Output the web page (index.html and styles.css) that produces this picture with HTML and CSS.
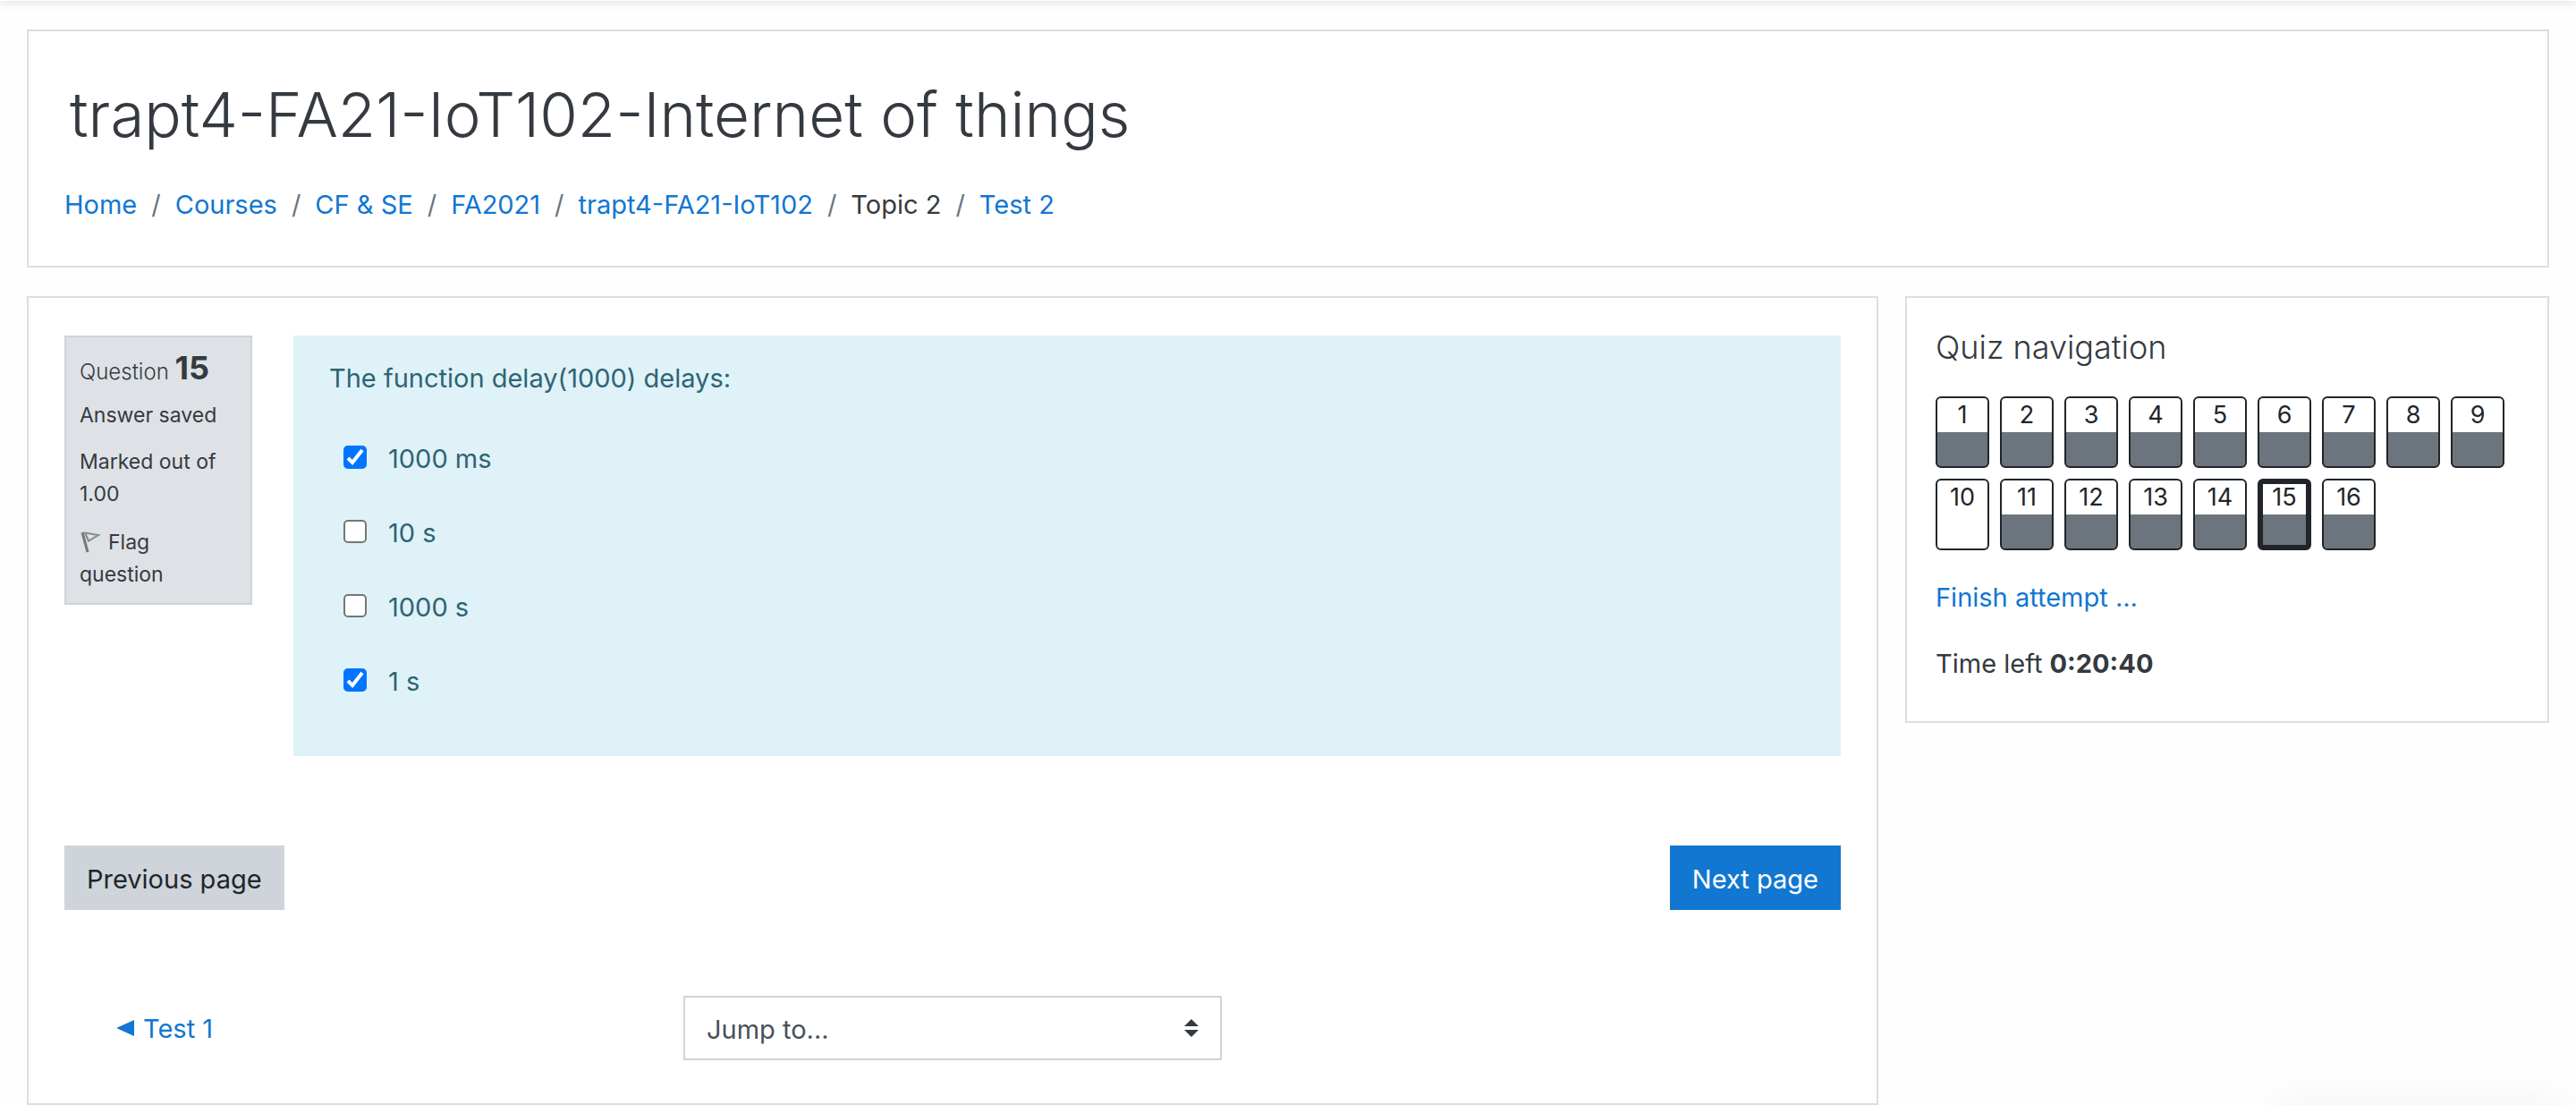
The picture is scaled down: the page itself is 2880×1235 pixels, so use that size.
FILE: index.html
```html
<!DOCTYPE html>
<html lang="en">
<head>
<meta charset="utf-8">
<meta name="viewport" content="width=device-width, initial-scale=1">
<title>Test 2</title>
<link rel="stylesheet" href="styles.css">
</head>
<body>
<div class="navbar-edge"></div>
<div class="page">
  <header class="card page-header">
    <h1 class="page-title">trapt4-FA21-IoT102-Internet of things</h1>
    <nav aria-label="Breadcrumb">
      <ol class="breadcrumb">
        <li><a href="#">Home</a></li>
        <li><a href="#">Courses</a></li>
        <li><a href="#">CF &amp; SE</a></li>
        <li><a href="#">FA2021</a></li>
        <li><a href="#">trapt4-FA21-IoT102</a></li>
        <li>Topic 2</li>
        <li><a href="#">Test 2</a></li>
      </ol>
    </nav>
  </header>

  <div class="columns">
    <main class="card quiz">
      <div class="question">
        <section class="info">
          <h2 class="info-number">Question <span class="qno">15</span></h2>
          <p class="info-state">Answer saved</p>
          <p class="info-grade">Marked out of 1.00</p>
          <a class="flag" href="#"><svg class="flag-icon" width="24" height="24" viewBox="0 0 24 24" aria-hidden="true"><path d="M3 1 L9 23" fill="none" stroke="#777" stroke-width="3"/><path d="M6 1.500 L21 4 L10 10.500 Z" fill="none" stroke="#8a8a8a" stroke-width="2"/></svg>Flag question</a>
        </section>
        <form class="formulation">
          <p class="qtext">The function delay(1000) delays:</p>
          <div class="answers">
            <label class="answer"><input class="tick" type="checkbox" checked><span>1000 ms</span></label>
            <label class="answer"><input class="tick" type="checkbox"><span>10 s</span></label>
            <label class="answer"><input class="tick" type="checkbox"><span>1000 s</span></label>
            <label class="answer"><input class="tick" type="checkbox" checked><span>1 s</span></label>
          </div>
        </form>
      </div>
      <div class="pager">
        <button class="btn btn-secondary" type="button">Previous page</button>
        <button class="btn btn-primary" type="button">Next page</button>
      </div>
      <div class="activity-nav">
        <a class="prev-activity" href="#"><svg width="20" height="18" viewBox="0 0 20 18" aria-hidden="true"><path d="M0 9 L20 0 V18 Z" fill="#1177d1"/></svg>Test 1</a>
        <div class="jump">
          <select class="jump-select" aria-label="Jump to...">
            <option>Jump to...</option>
          </select>
          <svg class="jump-arrows" width="16" height="20" viewBox="0 0 16 20" aria-hidden="true"><path d="M0 8 L8 0 L16 8 Z M0 12 L8 20 L16 12 Z" fill="#343a40"/></svg>
        </div>
      </div>
    </main>

    <aside class="card quiz-nav">
      <h2 class="quiz-nav-title">Quiz navigation</h2>
      <div class="qn-buttons">
        <a class="qn answered" href="#">1</a>
        <a class="qn answered" href="#">2</a>
        <a class="qn answered" href="#">3</a>
        <a class="qn answered" href="#">4</a>
        <a class="qn answered" href="#">5</a>
        <a class="qn answered" href="#">6</a>
        <a class="qn answered" href="#">7</a>
        <a class="qn answered" href="#">8</a>
        <a class="qn answered" href="#">9</a>
        <a class="qn" href="#">10</a>
        <a class="qn answered" href="#">11</a>
        <a class="qn answered" href="#">12</a>
        <a class="qn answered" href="#">13</a>
        <a class="qn answered" href="#">14</a>
        <a class="qn answered current" href="#" aria-current="page">15</a>
        <a class="qn answered" href="#">16</a>
      </div>
      <a class="finish" href="#">Finish attempt ...</a>
      <p class="timer">Time left <strong>0:20:40</strong></p>
    </aside>
  </div>
</div>
<div class="drawer-shadow"></div>
</body>
</html>
```
FILE: styles.css
```css
*, *::before, *::after { box-sizing: border-box; }

body {
  margin: 0;
  background: #fefefe;
  color: #343a40;
  font-family: Inter, "Liberation Sans", sans-serif;
  font-size: 29px;
  line-height: 45px;
}

h1, h2, p, ol { margin: 0; padding: 0; }
a { color: #1177d1; text-decoration: none; }

/* only the lower edge of the fixed bar and its shadow reach into view */
.navbar-edge {
  position: fixed;
  top: -39px;
  left: 0;
  right: 0;
  height: 40px;
  background: #fefefe;
  box-shadow: 0 4px 8px rgba(0, 0, 0, 0.09);
}

.page { padding: 33px 30px 0; }

.card {
  background: #fff;
  border: 2px solid #dedede;
}

.page-header { padding: 48px 40px 46px; }

.page-title {
  padding-left: 6px;
  margin-bottom: 33px;
  font-size: 69px;
  font-weight: 300;
  line-height: 90px;
}

.breadcrumb {
  display: flex;
  flex-wrap: wrap;
  list-style: none;
}
.breadcrumb li + li::before {
  content: "/";
  padding: 0 16px;
  color: #6c757d;
}

.columns {
  display: grid;
  grid-template-columns: minmax(0, 1fr) 720px;
  gap: 30px;
  align-items: start;
  margin-top: 32px;
}

.quiz { padding: 42px 40px 48px; }

.question {
  display: flex;
  align-items: flex-start;
  gap: 46px;
}

.info {
  flex: none;
  width: 210px;
  padding: 12px 15px 14px;
  background: #dee2e6;
  border: 2px solid #ced4da;
  font-size: 23px;
  line-height: 36px;
}
.info-number {
  margin-bottom: 8px;
  font-size: 24px;
  font-weight: 300;
  line-height: 44px;
}
.qno { font-size: 36px; font-weight: 700; }
.info-state { margin-bottom: 16px; }
.info-grade { margin-bottom: 18px; }
.flag { display: block; color: #343a40; }
.flag-icon { margin-right: 8px; vertical-align: -4px; }

.formulation {
  flex: 1;
  min-height: 470px;
  padding: 25px 40px;
  background: #def2f8;
  color: #2f6473;
}
.qtext { margin-bottom: 45px; }
.answers {
  display: flex;
  flex-direction: column;
  gap: 38px;
  padding-left: 16px;
}
.answer {
  display: flex;
  align-items: center;
  gap: 24px;
}
.tick {
  flex: none;
  width: 26px;
  height: 26px;
  margin: 0 0 4px;
  appearance: none;
  background: #fff;
  border: 2px solid #767676;
  border-radius: 5px;
}
.tick:checked {
  border: 0;
  background: #0075ff url("data:image/svg+xml,%3Csvg xmlns='http://www.w3.org/2000/svg' viewBox='0 0 26 26'%3E%3Cpath d='M5 14 L10 19 L21 5' fill='none' stroke='white' stroke-width='4'/%3E%3C/svg%3E");
}

.pager {
  display: flex;
  justify-content: space-between;
  margin-top: 100px;
}
.btn {
  height: 72px;
  padding: 2px 25px 0;
  border: 0;
  font: inherit;
}
.btn-secondary { background: #ced4da; color: #212529; }
.btn-primary { background: #1177d1; color: #fff; }

.activity-nav {
  display: grid;
  grid-template-columns: 634px 602px;
  align-items: center;
  margin-top: 96px;
  padding-left: 58px;
}
.prev-activity {
  display: flex;
  align-items: center;
  gap: 10px;
}
.jump {
  display: grid;
  align-items: center;
}
.jump > * { grid-area: 1 / 1; }
.jump-select {
  width: 100%;
  height: 72px;
  padding: 2px 24px 0;
  appearance: none;
  background: #fff;
  border: 2px solid #ced4da;
  border-radius: 0;
  color: #495057;
  font: inherit;
}
.jump-arrows {
  justify-self: end;
  margin-right: 26px;
  pointer-events: none;
}

.quiz-nav { padding: 30px 32px 42px; }
.quiz-nav-title {
  margin-bottom: 30px;
  font-size: 36px;
  font-weight: 300;
  line-height: 50px;
}
.qn-buttons {
  display: flex;
  flex-wrap: wrap;
  gap: 12px;
  margin-bottom: 30px;
}
.qn {
  width: 60px;
  height: 80px;
  border: 2px solid #212529;
  border-radius: 6px;
  background: #fff;
  color: #212529;
  font-size: 27px;
  line-height: 38px;
  text-align: center;
}
.qn.answered { background: linear-gradient(#fff 50%, #6c757d 50%); }
.qn.current { border-width: 6px; line-height: 30px; }
.finish { display: block; margin-bottom: 29px; }

/* blur of the panel that sits below the lower right corner */
.drawer-shadow {
  position: fixed;
  right: 10px;
  bottom: -20px;
  width: 330px;
  height: 20px;
  border-radius: 20px;
  box-shadow: 0 0 40px rgba(0, 0, 0, 0.07);
}
```
